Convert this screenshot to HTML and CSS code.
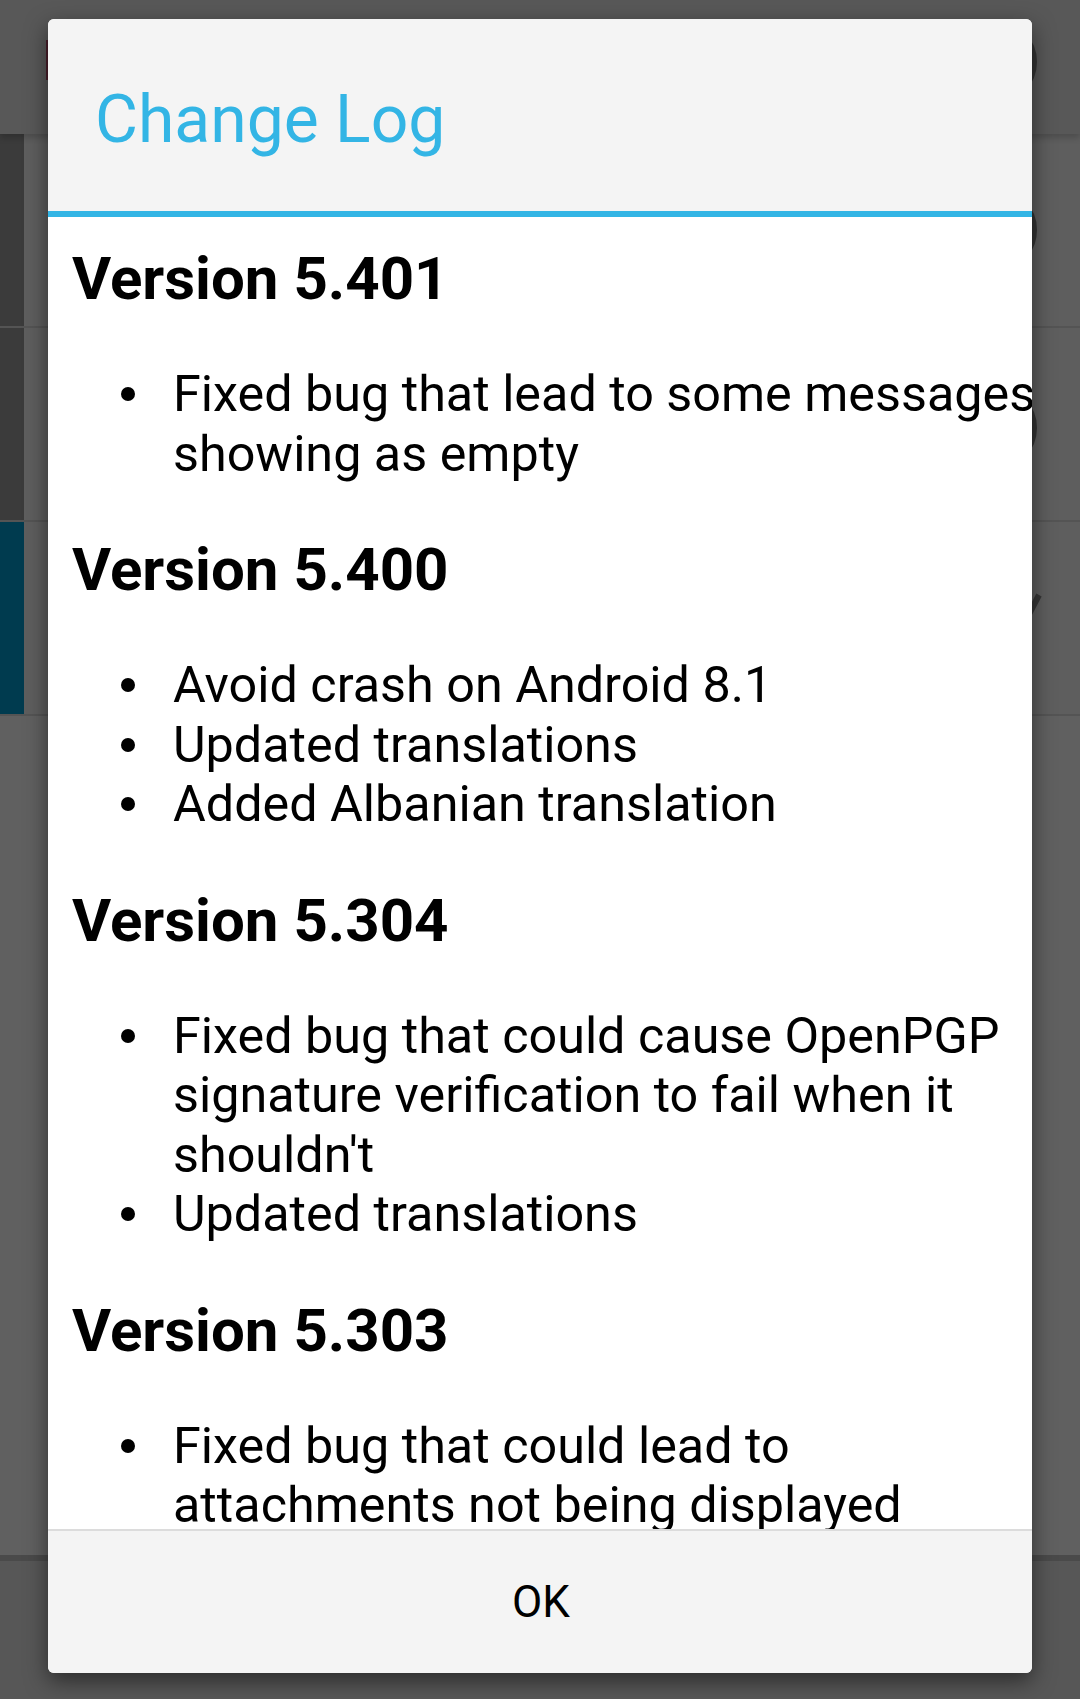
FILE: index.html
```html
<!DOCTYPE html>
<html lang="en">
<head>
<meta charset="utf-8">
<title>Change Log</title>
<link rel="stylesheet" href="styles.css">
</head>
<body>
<div class="app">
  <div class="toolbar"><span class="toolbar-icon"></span><span class="ring ring-toolbar"></span></div>
  <div class="row"><span class="chip"></span><span class="ring ring-row"></span></div>
  <div class="row"><span class="chip"></span><span class="ring ring-row2"></span></div>
  <div class="row"><span class="chip chip-teal"></span>
    <svg class="row-chevron" width="56" height="50" viewBox="0 0 56 50"><polyline points="4,4 26,46 48,4" fill="none" stroke="#363636" stroke-width="6"/></svg>
  </div>
  <div class="rest"></div>
  <div class="bottombar"></div>
</div>

<div class="dialog">
  <div class="dialog-title">Change Log</div>
  <div class="dialog-body">
    <div class="log">
      <section class="release">
        <h2 class="release-title">Version 5.401</h2>
        <ul class="changes">
          <li>Fixed bug that lead to some messages showing as empty</li>
        </ul>
      </section>
      <section class="release">
        <h2 class="release-title">Version 5.400</h2>
        <ul class="changes">
          <li>Avoid crash on Android 8.1</li>
          <li>Updated translations</li>
          <li>Added Albanian translation</li>
        </ul>
      </section>
      <section class="release">
        <h2 class="release-title">Version 5.304</h2>
        <ul class="changes">
          <li>Fixed bug that could cause OpenPGP signature verification to fail when it shouldn't</li>
          <li>Updated translations</li>
        </ul>
      </section>
      <section class="release">
        <h2 class="release-title">Version 5.303</h2>
        <ul class="changes">
          <li>Fixed bug that could lead to attachments not being displayed</li>
        </ul>
      </section>
    </div>
  </div>
  <div class="dialog-footer"><button class="ok-button">OK</button></div>
</div>
</body>
</html>
```
FILE: styles.css
```css
html, body {
  margin: 0;
  padding: 0;
}
body {
  width: 1080px;
  height: 1699px;
  overflow: hidden;
  position: relative;
  background: #5f5f5f;
  font-family: Roboto, "Noto Sans", sans-serif;
}

/* dimmed app behind the dialog */
.app {
  display: flex;
  flex-direction: column;
  height: 1699px;
}
.toolbar {
  height: 134px;
  flex: none;
  background: #585858;
  position: relative;
  box-shadow: 0 4px 6px rgba(0,0,0,0.18);
  z-index: 1;
}
.toolbar-icon {
  position: absolute;
  left: 46px;
  top: 40px;
  width: 30px;
  height: 40px;
  background: #4a1f2b;
}
.ring {
  position: absolute;
  right: 43px;
  width: 84px;
  height: 84px;
  border: 6px solid #333;
  border-radius: 50%;
  box-sizing: border-box;
}
.ring-toolbar { top: 20px; }
.ring-row { top: 54px; }
.ring-row2 { top: 58px; }
.row {
  height: 192px;
  flex: none;
  background: #5e5e5e;
  border-bottom: 2px solid #545454;
  position: relative;
  overflow: hidden;
}
.chip {
  display: block;
  width: 24px;
  height: 100%;
  background: #3b3b3b;
}
.chip-teal { background: #003b4f; }
.row-chevron {
  position: absolute;
  right: 33px;
  top: 69px;
}
.rest {
  flex: 1;
  background: #606060;
}
.bottombar {
  height: 138px;
  flex: none;
  background: #575757;
  border-top: 6px solid #4a4a4a;
}

/* dialog */
.dialog {
  position: absolute;
  z-index: 5;
  left: 48px;
  top: 19px;
  width: 984px;
  height: 1654px;
  display: flex;
  flex-direction: column;
  border-radius: 6px;
  overflow: hidden;
  background: #f4f4f4;
  box-shadow: 0 8px 22px rgba(0,0,0,0.5);
}
.dialog-title {
  height: 198px;
  flex: none;
  display: flex;
  align-items: center;
  padding-left: 47px;
  padding-top: 8px;
  box-sizing: border-box;
  font-size: 66px;
  color: #33b5e5;
  background: #f4f4f4;
  border-bottom: 6px solid #33b5e5;
}
.dialog-body {
  flex: 1;
  background: #fff;
  overflow: hidden;
  border-bottom: 2px solid #dcdcdc;
}
.log {
  width: 975px;
  padding: 27px 0 0 24px;
  color: #000;
}
.release-title {
  margin: 0;
  font-size: 60px;
  line-height: 70px;
  font-weight: 700;
}
.changes {
  list-style: none;
  margin: 50px 0 52px;
  padding: 0;
  font-size: 50.3px;
  line-height: 59.5px;
}
.changes li {
  display: flex;
  align-items: flex-start;
}
.changes li::before {
  content: "";
  flex: none;
  width: 14px;
  height: 14px;
  border-radius: 50%;
  background: #000;
  margin: 23px 38px 0 49px;
}
.dialog-footer {
  height: 142px;
  flex: none;
  display: flex;
  background: #f4f4f4;
}
.ok-button {
  flex: 1;
  border: 0;
  background: transparent;
  font-family: Roboto, "Noto Sans", sans-serif;
  font-size: 44px;
  color: #000;
  padding: 0 0 0 2px;
}
```
